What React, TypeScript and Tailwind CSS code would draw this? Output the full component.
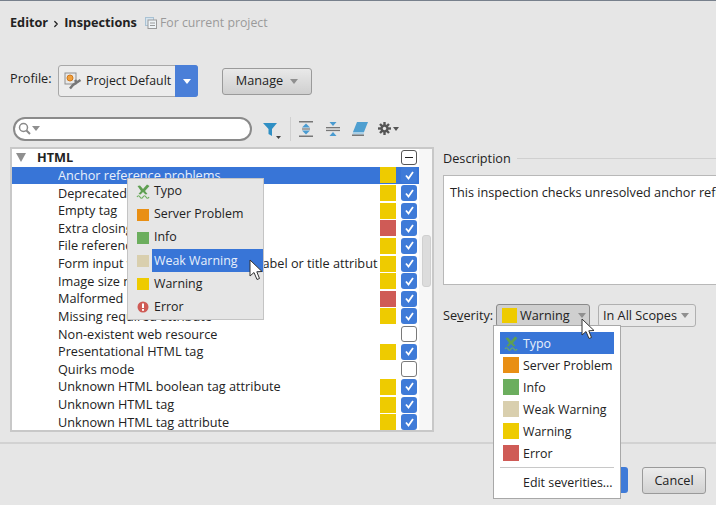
import { ChevronRight } from 'lucide-react';

type Level = 'Warning' | 'Error' | '';

const swatchColors: Record<string, string> = {
  'Server Problem': 'bg-[#e98f14]',
  Info: 'bg-[#6cae5e]',
  'Weak Warning': 'bg-[#d9cfae]',
  Warning: 'bg-[#eecb00]',
  Error: 'bg-[#cf5b56]',
};

const rows: { name: string; level: Level; on: boolean }[] = [
  { name: 'Anchor reference problems', level: 'Warning', on: true },
  { name: 'Deprecated HTML tag', level: 'Warning', on: true },
  { name: 'Empty tag', level: 'Warning', on: true },
  { name: 'Extra closing tag', level: 'Error', on: true },
  { name: 'File reference problems', level: 'Warning', on: true },
  { name: 'Form input without an associated label or title attribute', level: 'Warning', on: true },
  { name: 'Image size mismatch', level: 'Warning', on: true },
  { name: 'Malformed HTML', level: 'Error', on: true },
  { name: 'Missing required attribute', level: 'Warning', on: true },
  { name: 'Non-existent web resource', level: '', on: false },
  { name: 'Presentational HTML tag', level: 'Warning', on: true },
  { name: 'Quirks mode', level: '', on: false },
  { name: 'Unknown HTML boolean tag attribute', level: 'Warning', on: true },
  { name: 'Unknown HTML tag', level: 'Warning', on: true },
  { name: 'Unknown HTML tag attribute', level: 'Warning', on: true },
];

const severities = ['Typo', 'Server Problem', 'Info', 'Weak Warning', 'Warning', 'Error'];

const TypoIcon = () => (
  <svg width="15" height="15" viewBox="0 0 15 15" fill="none">
    <path d="M1.500 2 L4 1.500 L7 5 L11 0.500 L13.500 2 L9 7 L11.500 10 L9.500 10.500 L7 8 L4.500 10.500 L2.500 10 L5 7 Z" fill="#5f9f52" />
    <path d="M1 13 Q2.500 10.500 4 13 T7 13 T10 13 T13 13" stroke="#6cae5e" strokeWidth="1.200" />
  </svg>
);

const ErrorIcon = () => (
  <svg width="12" height="12" viewBox="0 0 12 12">
    <circle cx="6" cy="6" r="5.500" fill="#cf5b56" />
    <rect x="5" y="2.500" width="2" height="4.500" fill="#fff" />
    <rect x="5" y="8" width="2" height="1.800" fill="#fff" />
  </svg>
);

const Cursor = ({ className }: { className: string }) => (
  <svg className={className} width="15" height="23" viewBox="0 0 15 23">
    <path d="M1 1 L1 17 L5 13.500 L8 20.500 L10.500 19.500 L7.800 12.800 L13 12.500 Z" fill="#fff" stroke="#333" strokeWidth="1" strokeLinejoin="round" />
  </svg>
);

const Caret = ({ color = 'border-t-[#8f8f8f]' }: { color?: string }) => (
  <span className={`inline-block w-0 h-0 border-x-[4px] border-x-transparent border-t-[5px] ${color}`} />
);

const Check = ({ on }: { on: boolean }) =>
  on ? (
    <span className="w-[16px] h-[16px] rounded-[3px] bg-[#3f7bd8] flex items-center justify-center">
      <svg width="11" height="11" viewBox="0 0 11 11" fill="none">
        <path d="M2 5.500 L4.500 8.500 L9 2" stroke="#fff" strokeWidth="1.800" />
      </svg>
    </span>
  ) : (
    <span className="w-[16px] h-[16px] rounded-[3px] bg-white border border-[#7a7a7a]" />
  );

const FilterIcon = () => (
  <svg width="19" height="18" viewBox="0 0 19 18">
    <path d="M0 1 H14 L9 7 V14 L5.500 12 V7 Z" fill="#2f8fc4" />
    <path d="M13 14 H18 L15.500 17 Z" fill="#444" />
  </svg>
);

const ExpandIcon = () => (
  <svg width="14" height="16" viewBox="0 0 14 16">
    <rect x="0" y="0" width="14" height="1.500" fill="#777" />
    <rect x="0" y="14.500" width="14" height="1.500" fill="#777" />
    <path d="M7 2.500 L11 6.500 H3 Z" fill="#4a9bd0" />
    <path d="M7 13.500 L11 9.500 H3 Z" fill="#4a9bd0" />
    <rect x="3" y="7.400" width="8" height="1.200" fill="#777" />
  </svg>
);

const CollapseIcon = () => (
  <svg width="14" height="16" viewBox="0 0 14 16">
    <rect x="0" y="6" width="14" height="1.300" fill="#777" />
    <rect x="0" y="8.800" width="14" height="1.300" fill="#777" />
    <path d="M7 5 L3.500 1 H10.500 Z" fill="#4a9bd0" />
    <path d="M7 11 L3.500 15 H10.500 Z" fill="#4a9bd0" />
  </svg>
);

const EraserIcon = () => (
  <svg width="17" height="15" viewBox="0 0 17 15">
    <path d="M5 1 H16 L12 11 H1 Z" fill="#4f9fd0" />
    <path d="M1 11 H12 L11.500 13.500 H0.500 Z" fill="#a9cfe6" />
    <rect x="0" y="13.500" width="12" height="1.500" fill="#777" />
  </svg>
);

const GearIcon = () => (
  <svg width="13" height="13" viewBox="0 0 13 13">
    <g stroke="#555" strokeWidth="2.400">
      <path d="M6.500 0 V13" />
      <path d="M0 6.500 H13" />
      <path d="M2 2 L11 11" />
      <path d="M11 2 L2 11" />
    </g>
    <circle cx="6.500" cy="6.500" r="4" fill="#555" />
    <circle cx="6.500" cy="6.500" r="1.700" fill="#e6e6e6" />
  </svg>
);

const ProfileIcon = () => (
  <svg width="18" height="18" viewBox="0 0 18 18" fill="none">
    <rect x="1" y="1" width="11" height="11" fill="#e8e8e8" stroke="#8f8f8f" />
    <circle cx="6" cy="6" r="3" fill="#f0a03c" stroke="#d0781a" />
    <path d="M16.500 8 L9 13 L6 16.500" stroke="#777" strokeWidth="2.500" />
    <path d="M11 8 L13 11" stroke="#777" strokeWidth="2.500" />
  </svg>
);

const PageIcon = () => (
  <svg width="12" height="12" viewBox="0 0 12 12" fill="none">
    <rect x="0.500" y="0.500" width="8" height="8" fill="#d6e4ee" stroke="#a9c2d4" />
    <rect x="3" y="3" width="8.500" height="8.500" fill="#eef3f6" stroke="#9a9a9a" />
    <path d="M5 6 H10 M5 8.500 H10" stroke="#9a9a9a" />
  </svg>
);

const SeverityMark = ({ name, small }: { name: string; small: boolean }) => {
  if (name === 'Typo') return <TypoIcon />;
  if (name === 'Error' && small) return <ErrorIcon />;
  return <span className={`${small ? 'w-[12px] h-[12px]' : 'w-[16px] h-[16px]'} ${swatchColors[name]}`} />;
};

export default function App() {
  return (
    <div className="relative w-[716px] h-[505px] overflow-hidden bg-[#e6e6e6] text-[12.700px] text-[#222] border-t border-[#77808c] [font-family:'Open_Sans','Noto_Sans',sans-serif]">
      <div className="h-[443px] border-b-2 border-[#d2d2d2] pl-[10px] flex flex-col">
        <div className="flex items-center h-[44px]">
          <span className="font-bold">Editor</span>
          <ChevronRight size={10} strokeWidth={3} className="mx-[3px] mt-[2px]" />
          <span className="font-bold">Inspections</span>
          <span className="ml-[8px] mr-[3px]"><PageIcon /></span>
          <span className="text-[#9a9a9a] text-[12.300px]">For current project</span>
        </div>

        <div className="flex items-center h-[32px] mt-[20px]">
          <span className="w-[48px] -mt-[4px]">Profile:</span>
          <div className="w-[140px] h-[32px] flex rounded-[3px] border border-[#a8a8a8] bg-[#ececec]">
            <div className="flex-1 flex items-center pl-[5px] gap-[4px] whitespace-nowrap text-[12.300px]">
              <ProfileIcon />
              Project Default
            </div>
            <div className="w-[23px] -my-px -mr-px rounded-r-[3px] bg-[#4a7fd8] flex items-center justify-center">
              <Caret color="border-t-white" />
            </div>
          </div>
          <div className="ml-[24px] w-[90px] h-[27px] rounded-[3px] border border-[#9a9a9a] bg-gradient-to-b from-[#e9e9e9] to-[#cfcfcf] flex items-center justify-center gap-[7px]">
            Manage
            <Caret />
          </div>
        </div>

        <div className="flex flex-1 mt-[19px] min-h-0">
          <div className="w-[424px] flex flex-col">
            <div className="flex items-center h-[25px] mb-[6px]">
              <div className="ml-[3px] w-[239px] h-[24px] rounded-full bg-white border-2 border-[#8a8a8a] flex items-center pl-[3px] gap-[1px]">
                <svg width="13" height="13" viewBox="0 0 13 13" fill="none">
                  <circle cx="5.500" cy="5.500" r="4" stroke="#8a8a8a" strokeWidth="1.500" />
                  <path d="M8.500 8.500 L12 12" stroke="#8a8a8a" strokeWidth="2" />
                </svg>
                <Caret />
              </div>
              <span className="ml-[11px] mt-[4px]"><FilterIcon /></span>
              <span className="ml-[8px] w-px h-[24px] bg-[#d0d0d0]" />
              <span className="ml-[8px]"><ExpandIcon /></span>
              <span className="ml-[13px]"><CollapseIcon /></span>
              <span className="ml-[12px]"><EraserIcon /></span>
              <span className="ml-[9px] flex items-center gap-[2px]">
                <GearIcon />
                <span className="w-0 h-0 border-x-[3px] border-x-transparent border-t-[4px] border-t-[#555]" />
              </span>
            </div>

            <div className="h-[285px] bg-white border-2 border-[#c8c8c8] flex overflow-hidden">
              <div className="w-[407px] flex flex-col">
                <div className="h-[17.640px] flex items-center">
                  <span className="ml-[4px] w-0 h-0 border-x-[5px] border-x-transparent border-t-[9px] border-t-[#8f8f8f]" />
                  <span className="ml-[11px] font-bold">HTML</span>
                  <span className="ml-auto mr-[2px] w-[16px] h-[15px] rounded-[3px] border border-[#555] bg-white flex items-center justify-center">
                    <span className="w-[8px] h-px bg-[#222]" />
                  </span>
                </div>
                {rows.map((row, i) => (
                  <div key={row.name} className={`h-[17.640px] flex items-center ${i === 0 ? 'bg-[#3875d7] text-[#e8f0fb]' : ''}`}>
                    <span className="ml-[46px] w-[320px] overflow-hidden whitespace-nowrap">{row.name}</span>
                    <span className="ml-[2px] w-[16px] h-[16px] flex">
                      {row.level && <span className={`w-full h-full ${swatchColors[row.level]}`} />}
                    </span>
                    <span className="ml-[5px] flex"><Check on={row.on} /></span>
                  </div>
                ))}
              </div>
              <div className="flex-1 bg-[#f7f7f7] relative">
                <div className="absolute left-[3px] right-[1px] top-[86px] h-[52px] rounded-[3px] bg-[#dcdcdc] border border-[#d0d0d0]" />
              </div>
            </div>
          </div>

          <div className="flex-1 ml-[9px] min-w-0 flex flex-col">
            <div className="flex items-center h-[19px] mt-[33px] gap-[6px]">
              <span className="whitespace-nowrap">Description</span>
              <span className="flex-1 h-px bg-[#d0d0d0]" />
            </div>
            <div className="mt-[7px] h-[110px] bg-white border border-[#b8b8b8] border-r-0 pl-[6px] pt-[7px] whitespace-nowrap overflow-hidden">
              This inspection checks unresolved anchor references
            </div>
            <div className="mt-[19px] flex items-center h-[23px]">
              <span className="w-[53px]">Se<span className="underline">v</span>erity:</span>
              <div className="w-[94px] h-[23px] rounded-[3px] border border-[#8a8a8a] bg-[#cfcfcf] flex items-center pl-[5px] gap-[3px] whitespace-nowrap">
                <span className="w-[15px] h-[15px] bg-[#eecb00]" />
                Warning
                <span className="ml-[5px] flex"><Caret /></span>
              </div>
              <div className="ml-[8px] w-[98px] h-[23px] rounded-[3px] border border-[#b0b0b0] bg-[#e8e8e8] flex items-center pl-[4px] gap-[4px] whitespace-nowrap">
                In All Scopes
                <Caret />
              </div>
            </div>
          </div>
        </div>
      </div>

      <div className="flex justify-end pt-[23px] pr-[10px] gap-[14px]">
        <div className="w-[60px] h-[26px] rounded-[3px] bg-[#3f7bd8] text-white flex items-center justify-center">OK</div>
        <div className="w-[64px] h-[27px] rounded-[3px] border border-[#9a9a9a] bg-gradient-to-b from-[#ececec] to-[#d2d2d2] flex items-center justify-center">
          Cancel
        </div>
      </div>

      {/* context menu over the tree */}
      <div className="absolute left-[127px] top-[177px] w-[137px] h-[142px] bg-[#e6e6e6] border border-[#c4c4c4] flex flex-col pt-[1px] text-[12.400px]">
        {severities.map((s) => (
          <div key={s} className="h-[23.100px] flex items-center">
            <span className="w-[24px] pl-[6px] flex justify-center">
              <SeverityMark name={s} small />
            </span>
            <span className={`h-full flex-1 flex items-center pl-[2px] whitespace-nowrap ${s === 'Weak Warning' ? 'bg-[#3875d7] text-[#e8f0fb]' : ''}`}>{s}</span>
          </div>
        ))}
      </div>
      <Cursor className="absolute left-[249px] top-[258px]" />

      {/* severity dropdown */}
      <div className="absolute left-[493px] top-[324px] w-[128px] h-[174px] bg-white border border-[#a8a8a8] p-[6px] pb-0 text-[12.400px]">
        {severities.map((s) => (
          <div key={s} className={`h-[22px] flex items-center gap-[4px] pl-[3px] whitespace-nowrap ${s === 'Typo' ? 'bg-[#3875d7] text-[#e8f0fb]' : ''}`}>
            <span className="w-[16px] flex justify-center">
              <SeverityMark name={s} small={false} />
            </span>
            <span className="pt-[2px]">{s}</span>
          </div>
        ))}
        <div className="h-px bg-[#c8c8c8] mt-[3px]" />
        <div className="mt-[6px] pl-[23px] whitespace-nowrap">Edit severities...</div>
      </div>
      <Cursor className="absolute left-[581px] top-[317px]" />
    </div>
  );
}
